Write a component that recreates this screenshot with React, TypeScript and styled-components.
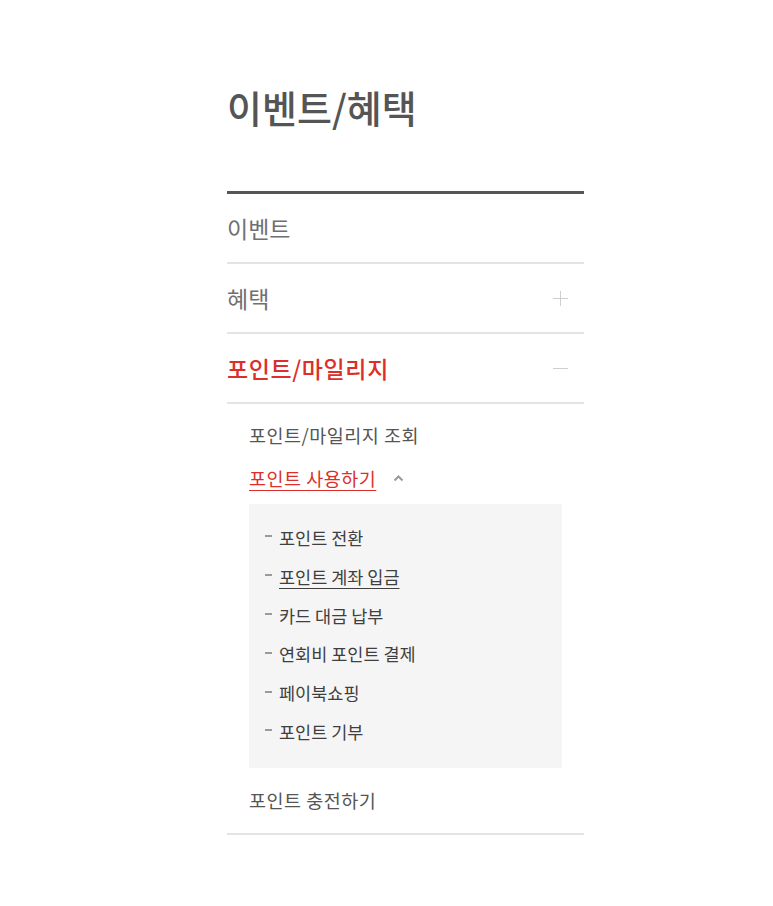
import styled, { createGlobalStyle } from "styled-components";

const GlobalStyle = createGlobalStyle`
  html, body {
    margin: 0;
    padding: 0;
    background: #ffffff;
  }
  body {
    font-family: "Noto Sans CJK KR", "Noto Sans", sans-serif;
  }
  ul {
    list-style: none;
    margin: 0;
    padding: 0;
  }
`;

const Page = styled.div`
  display: flex;
  padding-left: 227px;
  min-height: 906px;
  box-sizing: border-box;
`;

const Sidebar = styled.aside`
  width: 357px;
`;

const Title = styled.h2`
  margin: 0;
  padding-top: 85px;
  font-size: 38px;
  line-height: 44px;
  font-weight: 500;
  color: #555555;
  margin-bottom: 62px;
`;

const Nav = styled.ul`
  border-top: 3px solid #555555;
`;

const MenuItem = styled.li`
  border-bottom: 2px solid #e4e4e4;
`;

const MenuRow = styled.div<{ $active?: boolean }>`
  display: flex;
  align-items: center;
  justify-content: space-between;
  height: 68px;
  padding-right: 16px;
  font-size: 23px;
  letter-spacing: ${(p) => (p.$active ? "0.6px" : "0")};
  font-weight: ${(p) => (p.$active ? 500 : 400)};
  color: ${(p) => (p.$active ? "#dc2f2a" : "#707070")};
`;

const ToggleIcon = styled.svg`
  width: 15px;
  height: 15px;
  display: block;
`;

const SubMenu = styled.ul`
  border-top: 2px solid #e4e4e4;
  padding: 18px 22px 20px;
`;

const SubLink = styled.li<{ $active?: boolean }>`
  display: flex;
  align-items: center;
  gap: 17px;
  font-size: 18.5px;
  letter-spacing: 0.5px;
  line-height: 26px;
  color: ${(p) => (p.$active ? "#dc2f2a" : "#555555")};
  & + & {
    margin-top: 17px;
  }
`;

const LinkText = styled.span<{ $underline?: boolean }>`
  text-decoration: ${(p) => (p.$underline ? "underline" : "none")};
  text-underline-offset: 4px;
  text-decoration-thickness: 1px;
`;

const Chevron = styled.svg`
  width: 11px;
  height: 8px;
  display: block;
`;

const DepthBox = styled.ul`
  background: #f5f5f5;
  margin: 13px 0 19px;
  padding: 15px 0 16px;
`;

const DepthItem = styled.li`
  display: flex;
  align-items: center;
  padding-left: 16px;
  line-height: 38.8px;
  font-size: 17.5px;
  color: #3f3f3f;
  &::before {
    content: "";
    width: 7px;
    height: 2px;
    margin-right: 7px;
    margin-top: -4px;
    background: #9a9a9a;
  }
`;

const subItems = [
  { label: "포인트 전환" },
  { label: "포인트 계좌 입금", underline: true },
  { label: "카드 대금 납부" },
  { label: "연회비 포인트 결제" },
  { label: "페이북쇼핑" },
  { label: "포인트 기부" },
];

function Plus() {
  return (
    <ToggleIcon viewBox="0 0 15 15">
      <path d="M7.5 0v15M0 7.5h15" stroke="#cfcfcf" strokeWidth="1" fill="none" />
    </ToggleIcon>
  );
}

function Minus() {
  return (
    <ToggleIcon viewBox="0 0 15 15">
      <path d="M0 7.5h15" stroke="#cfcfcf" strokeWidth="1" fill="none" />
    </ToggleIcon>
  );
}

export default function App() {
  return (
    <>
      <GlobalStyle />
      <Page>
        <Sidebar>
          <Title>이벤트/혜택</Title>
          <Nav>
            <MenuItem>
              <MenuRow>이벤트</MenuRow>
            </MenuItem>
            <MenuItem>
              <MenuRow>
                혜택
                <Plus />
              </MenuRow>
            </MenuItem>
            <MenuItem>
              <MenuRow $active>
                포인트/마일리지
                <Minus />
              </MenuRow>
              <SubMenu>
                <SubLink>포인트/마일리지 조회</SubLink>
                <SubLink $active>
                  <LinkText $underline>포인트 사용하기</LinkText>
                  <Chevron viewBox="0 0 11 8">
                    <path d="M1.5 6.5L5.5 2.5L9.5 6.5" stroke="#9a9a9a" strokeWidth="2" fill="none" />
                  </Chevron>
                </SubLink>
                <DepthBox>
                  {subItems.map((item) => (
                    <DepthItem key={item.label}>
                      <LinkText $underline={item.underline}>{item.label}</LinkText>
                    </DepthItem>
                  ))}
                </DepthBox>
                <SubLink>포인트 충전하기</SubLink>
              </SubMenu>
            </MenuItem>
          </Nav>
        </Sidebar>
      </Page>
    </>
  );
}
